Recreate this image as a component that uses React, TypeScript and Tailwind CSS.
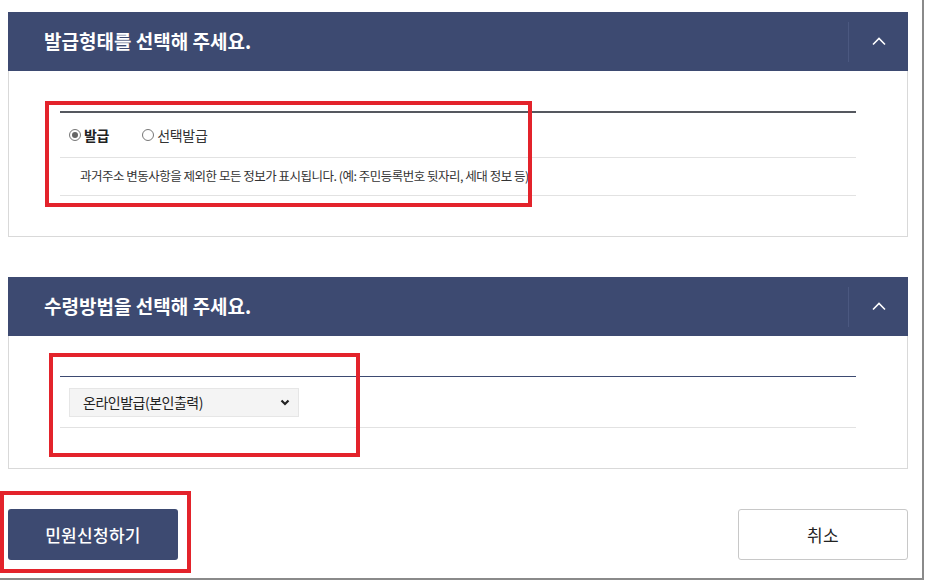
import React from "react";

const font = { fontFamily: '"Noto Sans CJK KR", "Noto Sans", sans-serif' };

function ChevronUp() {
  return (
    <svg width="16" height="10" viewBox="0 0 16 10" fill="none">
      <polyline points="2,8.5 8,2.5 14,8.5" stroke="#ffffff" strokeWidth="1.6" />
    </svg>
  );
}

function Header({ title }: { title: string }) {
  return (
    <div className="flex h-[59px] items-center bg-[#3d4a71]">
      <div className="flex-1 pl-[36px] text-[19px] font-bold tracking-[0px] text-white">{title}</div>
      <div className="h-[40px] w-px bg-[#4b5880]" />
      <div className="flex w-[59px] items-center justify-center pb-[2px]">
        <ChevronUp />
      </div>
    </div>
  );
}

function Radio({ checked }: { checked: boolean }) {
  return (
    <span className="relative inline-flex h-[12px] w-[12px] items-center justify-center rounded-full border border-[#777] bg-white">
      {checked && <span className="h-[6px] w-[6px] rounded-full bg-[#666]" />}
    </span>
  );
}

export default function App() {
  return (
    <div className="relative h-[582px] w-[926px] overflow-hidden bg-white" style={font}>
      <div className="h-[580px] w-[924px] border-b-2 border-r-2 border-[#8a8a8a] pl-[8px] pt-[12px]">
        <div className="w-[900px]">
          {/* Panel 1 */}
          <Header title="발급형태를 선택해 주세요." />
          <div className="border-x border-b border-[#d9d9d9] px-[51px] pb-[40px] pt-[40px]">
            <div className="border-t-2 border-[#55585f]">
              <div className="flex h-[45px] items-center border-b border-[#e2e2e2] pl-[9px] text-[14px] text-[#222]">
                <span className="flex items-center gap-[3px]">
                  <Radio checked />
                  <span className="font-bold tracking-[-0.3px]">발급</span>
                </span>
                <span className="ml-[33px] flex items-center gap-[3px]">
                  <Radio checked={false} />
                  <span className="tracking-[-0.3px] text-[#333]">선택발급</span>
                </span>
              </div>
              <div className="flex h-[38px] items-center border-b border-[#e2e2e2] pl-[20px] text-[12.5px] tracking-[-0.5px] text-[#333]">
                과거주소 변동사항을 제외한 모든 정보가 표시됩니다. (예: 주민등록번호 뒷자리, 세대 정보 등)
              </div>
            </div>
          </div>

          {/* Panel 2 */}
          <div className="mt-[40px]">
            <Header title="수령방법을 선택해 주세요." />
            <div className="border-x border-b border-[#d9d9d9] px-[51px] pb-[40px] pt-[40px]">
              <div className="border-t border-[#3d4a71]">
                <div className="flex h-[51px] items-center border-b border-[#e2e2e2] pl-[9px]">
                  <div className="flex h-[29px] w-[230px] items-center justify-between border border-[#e6e6e6] bg-[#f4f4f4] pl-[13px] pr-[8px] text-[14px] tracking-[-0.5px] text-[#222]">
                    <span>온라인발급(본인출력)</span>
                    <svg width="10" height="7" viewBox="0 0 10 7" fill="none">
                      <polyline points="1.5,1.5 5,5 8.5,1.5" stroke="#222" strokeWidth="2.2" />
                    </svg>
                  </div>
                </div>
              </div>
            </div>
          </div>

          {/* Buttons */}
          <div className="mt-[40px] flex items-center justify-between">
            <button className="flex h-[51px] w-[170px] items-center justify-center rounded-[3px] bg-[#3d4a71] text-[17px] font-medium tracking-[0.3px] text-white">
              민원신청하기
            </button>
            <button className="flex h-[51px] w-[170px] items-center justify-center rounded-[3px] border border-[#c8c8c8] bg-white text-[17px] tracking-[0.3px] text-[#222]">
              취소
            </button>
          </div>
        </div>
      </div>

      {/* Red annotation boxes */}
      <div className="pointer-events-none absolute left-[45px] top-[101px] h-[106px] w-[487px] border-4 border-[#e3232b]" />
      <div className="pointer-events-none absolute left-[49px] top-[353px] h-[104px] w-[311px] border-4 border-[#e3232b]" />
      <div className="pointer-events-none absolute left-0 top-[491px] h-[82px] w-[191px] border-4 border-[#e3232b]" />
    </div>
  );
}
